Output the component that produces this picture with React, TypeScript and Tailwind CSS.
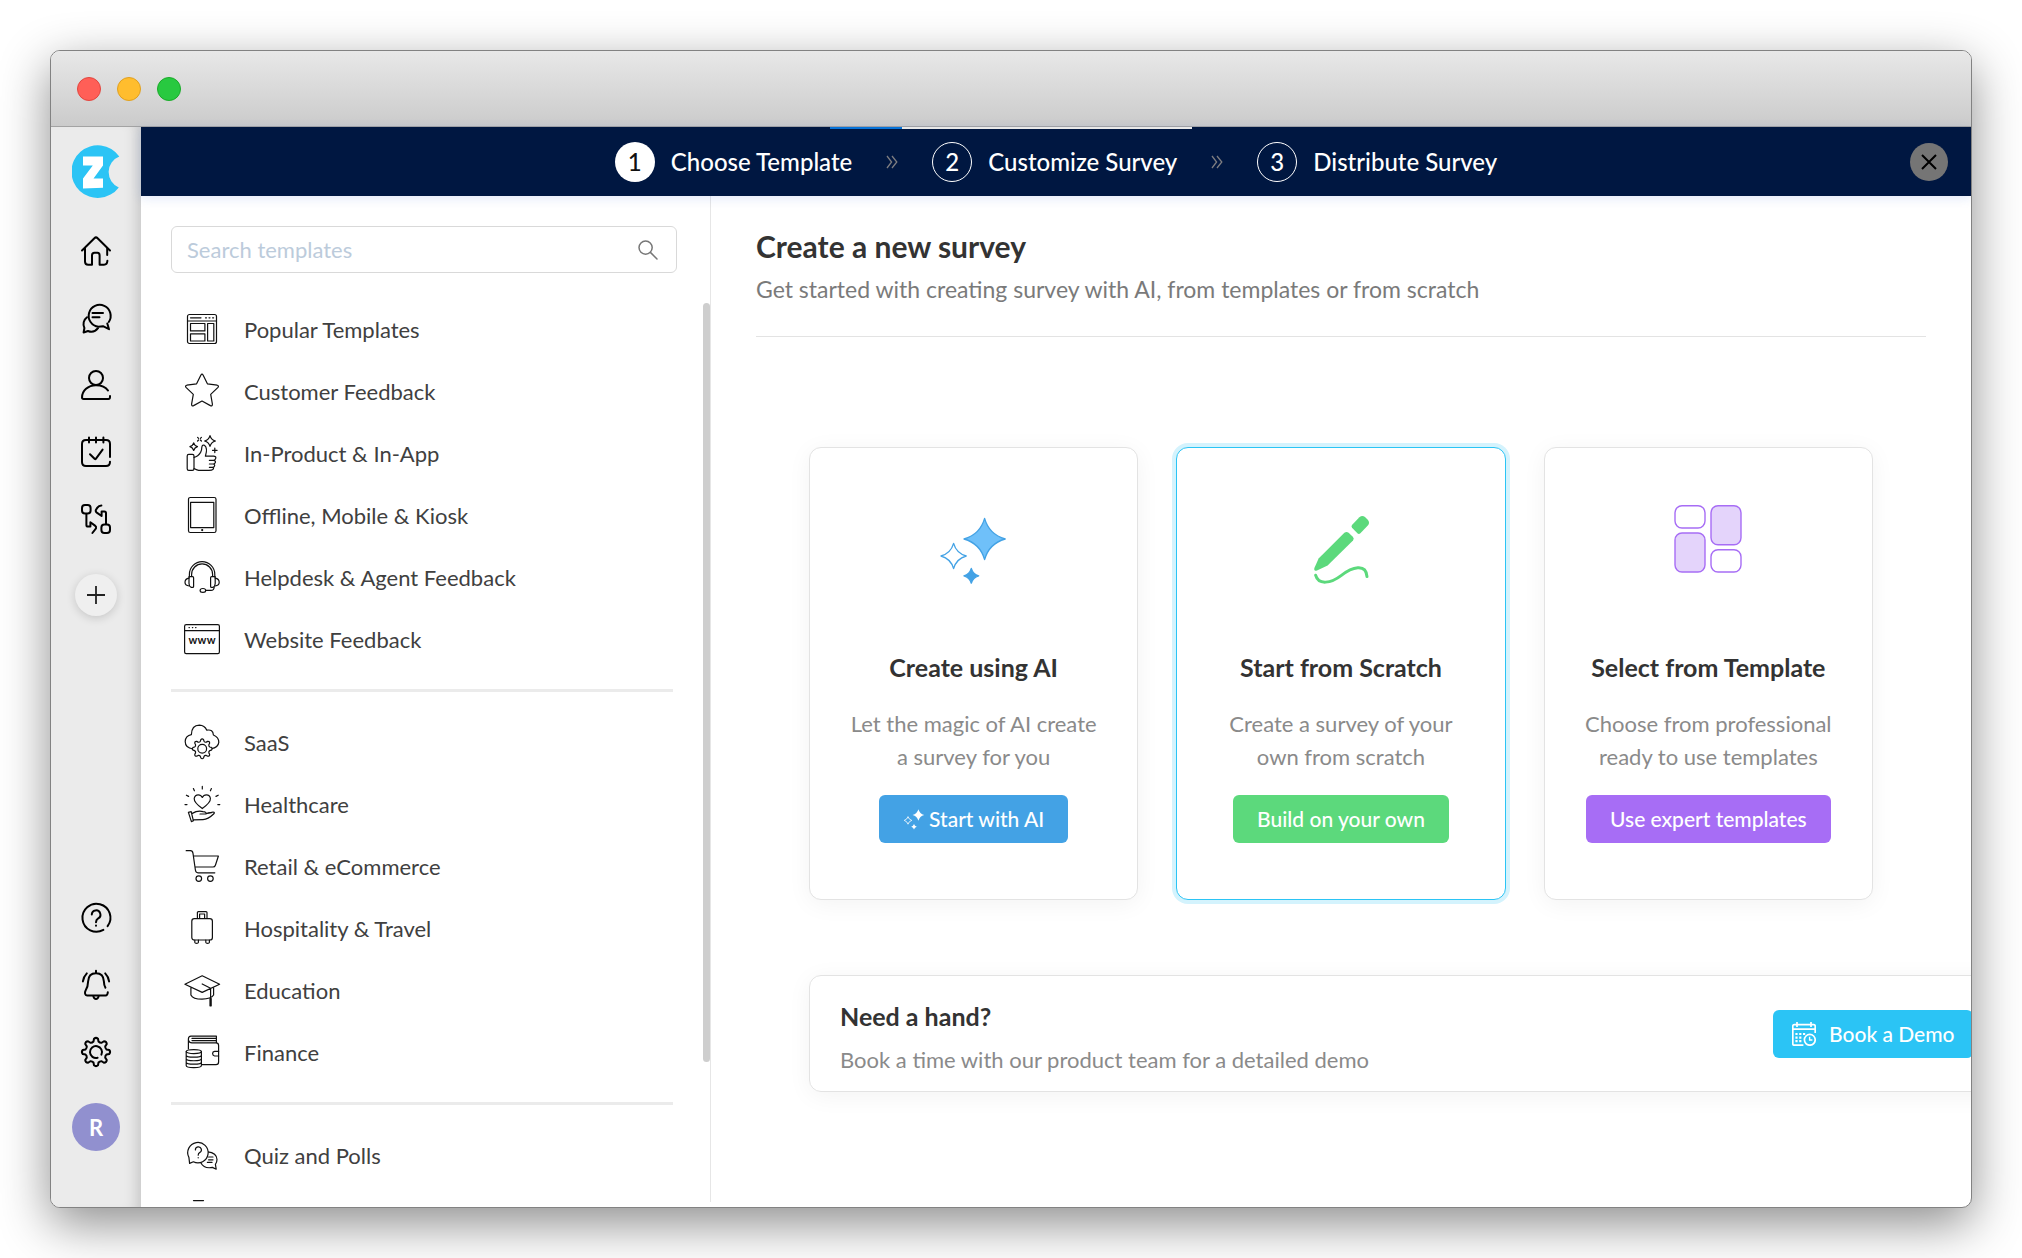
import React from "react";

/* ---------- drawing helpers ---------- */

function gearPath(cx: number, cy: number, outer: number, inner: number, teeth = 8) {
  const step = (Math.PI * 2) / teeth;
  const p = (r: number, a: number) =>
    `${(cx + r * Math.sin(a)).toFixed(2)} ${(cy - r * Math.cos(a)).toFixed(2)}`;
  let d = "";
  for (let i = 0; i < teeth; i++) {
    const a = i * step;
    d += `${i === 0 ? "M" : "L"}${p(inner, a - step * 0.3)}`;
    d += `L${p(outer - 1, a - step * 0.19)}Q${p(outer + 0.6, a)} ${p(outer - 1, a + step * 0.19)}`;
    d += `L${p(inner, a + step * 0.3)}Q${p(inner - 1, a + step * 0.5)} ${p(inner, a + step * 0.7)}`;
  }
  return d + "Z";
}

function sparklePath(cx: number, cy: number, r: number) {
  const k = r * 0.22;
  return `M${cx} ${cy - r}Q${cx + k} ${cy - k} ${cx + r} ${cy}Q${cx + k} ${cy + k} ${cx} ${cy + r}Q${cx - k} ${cy + k} ${cx - r} ${cy}Q${cx - k} ${cy - k} ${cx} ${cy - r}Z`;
}

function RailSvg({ children }: { children: React.ReactNode }) {
  return (
    <svg
      viewBox="0 0 30 30"
      className="h-[30px] w-[30px] overflow-visible"
      fill="none"
      stroke="#000"
      strokeWidth="2"
      strokeLinecap="round"
      strokeLinejoin="round"
      aria-hidden="true"
    >
      {children}
    </svg>
  );
}

function ListSvg({ children }: { children: React.ReactNode }) {
  return (
    <svg
      viewBox="0 0 36 36"
      className="h-9 w-9 shrink-0 overflow-visible"
      fill="none"
      stroke="#111"
      strokeWidth="1.2"
      strokeLinecap="round"
      strokeLinejoin="round"
      aria-hidden="true"
    >
      {children}
    </svg>
  );
}

/* ---------- rail icons ---------- */

const Logo = () => (
  <svg viewBox="0 0 48 54" className="h-[54px] w-12" aria-hidden="true">
    <path
      d="M47.3 11.6A26.3 26.3 0 1 0 46.8 42.4A16.6 16.6 0 0 1 47.3 11.6Z"
      fill="#2bc4f5"
    />
    <path d="M11 11.6H31V20.6L21.5 33.4H31V42.8L11 43.4V33.6L20.8 20.4H11Z" fill="#fff" />
  </svg>
);

const HomeIcon = () => (
  <RailSvg>
    <path d="M1 14.5 13.4 2.2Q15 .6 16.6 2.2L29 14.5" />
    <path d="M4 12.5V25.5Q4 28.7 7.2 28.7H11V19.5Q11 16.8 13.5 16.8H16.5Q18.6 16.8 18.6 19.5V28.7H23Q26.2 28.7 26.4 24.8M26.2 12.5V19" />
  </RailSvg>
);

const ChatIcon = () => (
  <RailSvg>
    <path d="M27.8 20A11 11 0 1 0 17.5 24.8L22 24.2 28 27.2 26.3 21.5" transform="translate(0 -1)" />
    <path d="M11.5 10H22M11.5 14.3H18.5" />
    <path d="M6 14.2A8.6 8.6 0 0 0 3.4 25L2.6 29.5 7 28Q13 30.4 17 25.2" />
  </RailSvg>
);

const UserIcon = () => (
  <RailSvg>
    <circle cx="15" cy="8" r="7" />
    <path d="M27 20.5Q23.5 15.2 15 15.2C7 15.2 1 20.8 1 27.6Q1 29 2.6 29H27.4Q29 29 29 27V26" />
  </RailSvg>
);

const CalendarIcon = () => (
  <RailSvg>
    <path d="M29 20V7Q29 3 25 3H5Q1 3 1 7V25Q1 29 5 29H25Q29 29 29 24.8" />
    <path d="M8 .6V5.6M15 .6V5.6M22.4 .6V5.6M9 17.2 13.8 22Q14.4 22.4 15 21.6L21.6 12.6" />
  </RailSvg>
);

const FlowIcon = () => (
  <RailSvg>
    <rect x="1" y="1" width="8.6" height="8.6" rx="3" />
    <rect x="20.4" y="20.4" width="8.6" height="8.6" rx="3" />
    <path d="M5.4 10V21Q5.4 22.6 7 22.6H9.4V18.2L14 21.6Q15.6 22.8 15 24.4L11.4 29" />
    <path d="M25 20V9.2Q25 7.6 23.4 7.6H20.6V12L15.8 8.6Q14.2 7.4 15 5.8L16.4 3.6Q17.8 1.4 20.4 1.4" />
  </RailSvg>
);

const HelpIcon = () => (
  <RailSvg>
    <path d="M26.6 23.2A14 14 0 1 0 22.4 26.9" />
    <path d="M10.8 11.6A4.3 4.3 0 1 1 17.2 15.4Q15 16.6 15 19.2M15 22.6V22.8" />
  </RailSvg>
);

const BellIcon = () => (
  <RailSvg>
    <path d="M15 .8V3M24.4 17.6Q23 15.5 22.9 11.5Q22.6 3.2 15 3.2T7.1 11.5Q7 16.8 4.6 20.5C3.4 22.6 4 25.4 6 25.4H24.6Q26.6 25.4 26.8 22.2" />
    <path d="M12.4 26.4Q13 29 15 29T17.6 26.4M5.8 3.4Q2.6 6.6 1.9 11.4M24.2 3.4Q27.4 6.6 28.1 11.4" />
  </RailSvg>
);

const SettingsIcon = () => (
  <RailSvg>
    <path d={gearPath(15, 15, 14.4, 10.8)} />
    <path d="M20.4 17.6A6 6 0 1 0 16.6 20.8" />
  </RailSvg>
);

/* ---------- template list icons ---------- */

const PopularIcon = () => (
  <ListSvg>
    <rect x="3.5" y="3.5" width="29" height="29" rx="2" />
    <path d="M3.5 10H32.5M6.5 6.8H17M21.5 6.8H22.5M25 6.8H26M28.6 6.8H29.6" />
    <rect x="6.5" y="12.5" width="14.4" height="7.4" />
    <rect x="6.5" y="22.8" width="14.4" height="7.2" />
    <rect x="23.6" y="12.5" width="6.2" height="17.5" />
  </ListSvg>
);

const StarIcon = () => (
  <ListSvg>
    <path d="M16.8 2.2q1.2-2 2.4 0l4.2 8.6 9.8 1.4q2 .6 .8 2.2l-7.3 7 1.7 9.8q0 2.2-2 1.4L18 28l-8.4 4.6q-2 .8-2-1.4l1.7-9.8-7.3-7q-1.2-1.6.8-2.2l9.8-1.4z" />
  </ListSvg>
);

const ThumbIcon = () => (
  <ListSvg>
    <rect x="3.2" y="19.4" width="6.8" height="16" rx="1.6" />
    <path d="M10 22.4Q14 21.6 16.6 17.4Q17.8 15.2 17.9 11.8Q18.4 9.6 20.4 10.2Q24 12.8 21.4 21.2H29.6Q32.2 21.4 31.8 23.2T29.6 25.4H25.4M29.6 25.4Q31.8 25.8 31.4 27.4T29.2 29H25.4M29.2 29Q31 29.4 30.6 30.8T28.6 32.4H25.4M28.6 32.4Q30.2 33.2 29 34.4Q28 35.4 25 35.4H14.6Q12.4 35 10 33.6" />
    <path d={sparklePath(26, 6, 5.4)} />
    <path d={sparklePath(9.7, 11.7, 3.8)} />
    <path d="M30.8 13V17.6M28.5 15.3H33.1M13.6 2.3 14.6 3.3M17.4 2.3 16.4 3.3M13.6 6 14.6 5M17.4 6 16.4 5" />
  </ListSvg>
);

const TabletIcon = () => (
  <ListSvg>
    <rect x="4.5" y="0.5" width="27.5" height="35" rx="1.8" />
    <rect x="6.6" y="5.4" width="23.2" height="25.2" />
    <circle cx="18.2" cy="33.1" r=".5" fill="#111" />
  </ListSvg>
);

const HeadsetIcon = () => (
  <ListSvg>
    <path d="M5.4 18V15.4A12.7 12.7 0 0 1 30.8 15.4V18M7.6 17V15.4A10.5 10.5 0 0 1 28.6 15.4V17" />
    <path d="M5 17.6H8.6Q9.6 17.6 9.6 18.8V27.4Q9.6 28.4 8.6 28.4H7.2Q5 27.4 5 24.6ZM31.2 17.6H27.6Q26.6 17.6 26.6 18.8V27.4Q26.6 28.4 27.6 28.4H29Q31.2 27.4 31.2 24.6Z" />
    <path d="M5 19.2Q1 20 1 23.2T5.2 27M31.2 19.2Q35.2 20 35.2 23.2T31 27M30.2 28Q30 31.4 27 31.4H21.8" />
    <ellipse cx="18.9" cy="31.4" rx="2.8" ry="1.9" />
  </ListSvg>
);

const WebsiteIcon = () => (
  <ListSvg>
    <rect x=".6" y="3.6" width="34.8" height="29" rx="1.6" />
    <path d="M.6 9.6H35.4M5 6.6H5.4M8.4 6.6H8.8M11.6 6.6H12" />
    <g
      textAnchor="middle"
      fill="#111"
      stroke="none"
      fontFamily="Lato, sans-serif"
      fontWeight="700"
      fontSize="11"
    >
      <text x="8.8" y="23.4">w</text>
      <text x="18" y="23.4">w</text>
      <text x="27.2" y="23.4">w</text>
    </g>
  </ListSvg>
);

const SaasIcon = () => (
  <ListSvg>
    <path d="M9 25Q1.2 24 1.2 17.6Q1.4 11.6 7.4 10.6Q7.6 1.4 15.4 1.2Q20.6 1.4 22.8 6.2Q29 5 29.4 11Q35 13.4 34.8 18.4Q34.2 23.6 27.4 24.6" />
    <path d={gearPath(18.2, 24.8, 10.2, 7.8, 8)} fill="#fff" />
    <circle cx="18.2" cy="24.8" r="4.4" />
  </ListSvg>
);

const HealthIcon = () => (
  <ListSvg>
    <path d="M18.3 22.6Q9.8 16.4 10.2 12.4Q11 8.8 14.2 8.8Q17 8.8 18.3 11.4Q19.6 8.8 22.4 8.8Q25.8 8.8 26.4 12.4Q26.8 16.4 18.3 22.6Z" />
    <path d="M18.3 .4V3M9.4 2.6 10.4 4.8M27.4 2.6 26.4 4.8M2.4 9.2 4.6 10.4M34.2 9.2 32 10.4M1 18.6H3M35.8 18.6H33.8" />
    <path d="M4.4 26.4 7.2 25.6 9.4 34.8 7.4 35.6ZM7.8 27.6 12 25.6Q16 24.8 19 25.6Q22.8 26 22 28H16M22 27.6 29 26Q31.4 26.2 29.6 28Q24 33.4 19 33.6L9.2 33.8" />
    <path d="M24 27 27.6 26.6" />
  </ListSvg>
);

const CartIcon = () => (
  <ListSvg>
    <path d="M2.2 2.7H6.4Q8.6 2.8 9 5.4L11.4 22Q11.8 24.8 14 24.8H30.8M9.4 8H34.4L31.4 17.2Q30.8 19 29 19H11" />
    <circle cx="14.8" cy="30.6" r="2.8" />
    <circle cx="26.4" cy="30.6" r="2.8" />
  </ListSvg>
);

const SuitcaseIcon = () => (
  <ListSvg>
    <rect x="7.8" y="8.6" width="20.6" height="21.4" rx="2.6" />
    <path d="M13.4 8.4V2.6Q13.4 1.6 14.4 1.6H22Q23 1.6 23 2.6V8.4M15.6 8.4V4H20.6V8.4M10.8 30.2V32.4Q11 33.4 12.6 33.4T14.4 32.4V30.2M21.8 30.2V32.4Q22 33.4 23.6 33.4T25.4 32.4V30.2" />
  </ListSvg>
);

const EducationIcon = () => (
  <ListSvg>
    <path d="M.9 12.2 18.2 3.8 35.6 12.2 18.2 20.4ZM6.9 15V23Q9 27.2 18 27.2Q27 27 29.6 23V15M18.2 12 26.6 16.2V27" />
    <path d="M26.6 27V33.4" strokeWidth="2.4" />
  </ListSvg>
);

const FinanceIcon = () => (
  <ListSvg>
    <path d="M4.4 15V5Q4.4 2.2 7 2.2H32.4V8.8M4.6 6.4Q5.2 8.8 8 8.8H32Q34.6 8.8 34.6 11.4V28Q34.6 30.6 32 30.6H18M8 4.4H32.2M8 6.6H32.2" />
    <path d="M34.6 17.4H30.6Q28.6 17.6 28.6 19.6T30.6 22H34.6" />
    <ellipse cx="9.8" cy="17.6" rx="7.6" ry="2" fill="#fff" />
    <path d="M2.2 17.6V31.6C2.2 34.4 17.4 34.4 17.4 31.6V17.6M2.2 21.2C2.2 23.8 17.4 23.8 17.4 21.2M2.2 24.8C2.2 27.4 17.4 27.4 17.4 24.8M2.2 28.2C2.2 30.8 17.4 30.8 17.4 28.2" />
  </ListSvg>
);

const QuizIcon = () => (
  <ListSvg>
    <path d="M23.6 14.8Q32.8 15.6 33 22.6Q33 25.4 31.4 27.4L32.2 32.2 28.4 30.4Q20 32 17 26" />
    <path d="M24.6 20H29M24.6 22.8H29M23.4 25.4H28" />
    <path d="M5.6 26.4 4.9 20.4A10.2 10.2 0 1 1 9.4 24.8Z" fill="#fff" />
    <path d="M11.4 13A3 3 0 1 1 15.6 15.6Q14.2 16.2 14.2 18.2M14.2 20.6V20.8" />
  </ListSvg>
);

const BadgeIcon = () => (
  <ListSvg>
    <path d="M9.5 1.6H19.5" />
    <rect x="6" y="5" width="24" height="28" rx="2" />
  </ListSvg>
);

/* ---------- card art ---------- */

const SparklesArt = () => (
  <svg viewBox="0 0 100 100" className="h-[100px] w-[100px]" fill="none" stroke="#43a2e5" strokeWidth="1.3" strokeLinejoin="round" aria-hidden="true">
    <path d={sparklePath(60.6, 48, 20.6)} fill="#6fc0f9" />
    <path d={sparklePath(29.6, 65, 12.6)} />
    <path d={sparklePath(47.3, 84.8, 7.4)} fill="#43a2e5" />
  </svg>
);

const PenArt = () => (
  <svg viewBox="0 0 100 100" className="h-[100px] w-[100px]" fill="#5cd97c" aria-hidden="true">
    <path d="M68.4 26.2Q71.2 23.8 74 26L77 29Q79.2 31.8 76.8 34.6L69.4 42.2Q67.8 43.6 66.4 42.2L61 36.8Q59.8 35.4 61.2 33.8Z" />
    <path d="M53.4 41.8Q55.6 40 57.6 41.8L61.8 45.8Q63.6 47.6 62 49.6L36.6 74.6 26 79.4Q22.6 80.6 23.4 77L27.6 67.4Z" />
    <path d="M24.6 84.2C27.4 94.4 40 92.4 50.4 84.4C61 76 75 72 76 85.6" fill="none" stroke="#5cd97c" strokeWidth="3" strokeLinecap="round" />
  </svg>
);

const GridArt = () => (
  <svg viewBox="0 0 100 100" className="h-[100px] w-[100px]" fill="none" stroke="#a76df5" strokeWidth="1.4" aria-hidden="true">
    <rect x="17" y="14.8" width="30" height="22.2" rx="7" />
    <rect x="17" y="42" width="30" height="39" rx="7" fill="#e4d4fb" />
    <rect x="53" y="14.8" width="30" height="39" rx="7" fill="#e4d4fb" />
    <rect x="53" y="58.8" width="30" height="22.2" rx="7" />
  </svg>
);

const SmallSparkles = () => (
  <svg viewBox="0 0 22 22" className="h-[22px] w-[22px]" fill="#fff" aria-hidden="true">
    <path d={sparklePath(15.4, 7, 5.8)} />
    <path d={sparklePath(5, 12.4, 3.8)} fill="none" stroke="#fff" strokeWidth=".8" />
    <path d={sparklePath(11, 18.8, 2.8)} />
  </svg>
);

const DemoIcon = () => (
  <svg viewBox="0 0 24 24" className="h-6 w-6" fill="none" stroke="#fff" strokeWidth="1.7" aria-hidden="true">
    <path d="M23.2 11V4Q23.2 2.6 21.8 2.6H2.2Q.8 2.6 .8 4V21.8Q.8 23.2 2.2 23.2H11.4M.8 7.2H23.2M5 0V5M19 0V5" />
    <path d="M3.4 12H5.6M7.2 12H9.4M11 12H13.2M3.4 15.6H5.6M7.2 15.6H9.4M3.4 19.2H5.6M7.2 19.2H9.4" strokeWidth="2.2" />
    <circle cx="17.8" cy="17.8" r="5.4" />
    <path d="M17.6 14.8V18H20.4" strokeWidth="1.4" />
  </svg>
);

const Chevrons = () => (
  <svg viewBox="0 0 12 14" className="h-[14px] w-3" fill="none" stroke="#7d7d80" strokeWidth="1.3" aria-hidden="true">
    <path d="M1 1 5.6 7 1 13M6 1 10.8 7 6 13" />
  </svg>
);

/* ---------- data ---------- */

const groups: { label: string; Icon: React.FC }[][] = [
  [
    { label: "Popular Templates", Icon: PopularIcon },
    { label: "Customer Feedback", Icon: StarIcon },
    { label: "In-Product & In-App", Icon: ThumbIcon },
    { label: "Offline, Mobile & Kiosk", Icon: TabletIcon },
    { label: "Helpdesk & Agent Feedback", Icon: HeadsetIcon },
    { label: "Website Feedback", Icon: WebsiteIcon },
  ],
  [
    { label: "SaaS", Icon: SaasIcon },
    { label: "Healthcare", Icon: HealthIcon },
    { label: "Retail & eCommerce", Icon: CartIcon },
    { label: "Hospitality & Travel", Icon: SuitcaseIcon },
    { label: "Education", Icon: EducationIcon },
    { label: "Finance", Icon: FinanceIcon },
  ],
  [
    { label: "Quiz and Polls", Icon: QuizIcon },
    { label: "", Icon: BadgeIcon },
  ],
];

const topNav = [
  { label: "Home", Icon: HomeIcon },
  { label: "Surveys", Icon: ChatIcon },
  { label: "Contacts", Icon: UserIcon },
  { label: "Tasks", Icon: CalendarIcon },
  { label: "Workflows", Icon: FlowIcon },
];

const bottomNav = [
  { label: "Help", Icon: HelpIcon },
  { label: "Notifications", Icon: BellIcon },
  { label: "Settings", Icon: SettingsIcon },
];

const steps = ["Choose Template", "Customize Survey", "Distribute Survey"];

const cards = [
  {
    title: "Create using AI",
    lines: ["Let the magic of AI create", "a survey for you"],
    action: "Start with AI",
    Art: SparklesArt,
    ButtonIcon: SmallSparkles,
    frame: "border-[#e3e3e3] shadow-[0_4px_24px_rgba(0,0,0,0.05)]",
    button: "bg-[#43a2e5]",
  },
  {
    title: "Start from Scratch",
    lines: ["Create a survey of your", "own from scratch"],
    action: "Build on your own",
    Art: PenArt,
    frame: "border-[#2bc4f5] shadow-[0_0_0_4px_#d4f3fd]",
    button: "bg-[#5cd97c]",
  },
  {
    title: "Select from Template",
    lines: ["Choose from professional", "ready to use templates"],
    action: "Use expert templates",
    Art: GridArt,
    frame: "border-[#e3e3e3] shadow-[0_4px_24px_rgba(0,0,0,0.05)]",
    button: "bg-[#a76df5]",
  },
];

/* ---------- sections ---------- */

function RailButton({ label, children }: { label: string; children: React.ReactNode }) {
  return (
    <button type="button" aria-label={label} className="flex h-[67px] w-full items-center justify-center">
      {children}
    </button>
  );
}

function Rail() {
  return (
    <nav className="flex w-[90px] shrink-0 flex-col items-center bg-[#ebebeb] pt-[18px] pb-14 shadow-[inset_-14px_0_14px_-10px_rgba(0,0,0,0.16)]">
      <Logo />
      <div className="mt-[18px] w-full">
        {topNav.map(({ label, Icon }) => (
          <RailButton key={label} label={label}>
            <Icon />
          </RailButton>
        ))}
      </div>
      <button
        type="button"
        aria-label="Add"
        className="mt-[22px] flex h-[42px] w-[42px] shrink-0 items-center justify-center rounded-full bg-[#efefef] shadow-[0_2px_10px_rgba(0,0,0,0.16)]"
      >
        <svg viewBox="0 0 18 18" className="h-[18px] w-[18px]" stroke="#222" strokeWidth="1.8" aria-hidden="true">
          <path d="M9 0V18M0 9H18" />
        </svg>
      </button>
      <div className="mt-auto w-full">
        {bottomNav.map(({ label, Icon }) => (
          <RailButton key={label} label={label}>
            <Icon />
          </RailButton>
        ))}
      </div>
      <button
        type="button"
        aria-label="Account"
        className="mt-[18px] flex h-12 w-12 shrink-0 items-center justify-center rounded-full bg-[#9190cf] text-[22px] font-bold text-white"
      >
        R
      </button>
    </nav>
  );
}

function StepBar() {
  return (
    <header className="relative z-10 flex h-[69px] shrink-0 items-center bg-[#001741] px-[23px] text-white shadow-[0_2px_10px_rgba(60,110,220,0.16)]">
      <div className="absolute top-0 left-[calc(50%-226px)] flex h-0.5 w-[362px] bg-[#e8e8e8]">
        <div className="w-1/5 bg-[#0672d8]" />
      </div>
      <ol className="flex flex-1 items-center justify-center gap-[34px] pl-[38px]">
        {steps.map((step, i) => (
          <React.Fragment key={step}>
            {i > 0 && (
              <li aria-hidden="true">
                <Chevrons />
              </li>
            )}
            <li className="flex items-center gap-4 text-[24px] leading-8 font-medium">
              <span
                className={
                  i === 0
                    ? "flex h-10 w-10 items-center justify-center rounded-full bg-white text-[#111]"
                    : "flex h-10 w-10 items-center justify-center rounded-full border border-white"
                }
              >
                {i + 1}
              </span>
              {step}
            </li>
          </React.Fragment>
        ))}
      </ol>
      <button type="button" aria-label="Close" className="flex h-[38px] w-[38px] items-center justify-center rounded-full bg-[#757575]">
        <svg viewBox="0 0 16 16" className="h-4 w-4" stroke="#000" strokeWidth="2" aria-hidden="true">
          <path d="M1 1 15 15M15 1 1 15" />
        </svg>
      </button>
    </header>
  );
}

function TemplatePanel() {
  return (
    <aside className="mb-[5px] flex min-h-0 w-[570px] shrink-0 flex-col border-r border-[#e6e6e6] pl-[30px]">
      <label className="mt-[30px] mr-[33px] flex h-[47px] shrink-0 items-center rounded-md border border-[#d9d9d9] pr-[18px] pl-[15px]">
        <input
          type="search"
          aria-label="Search templates"
          placeholder="Search templates"
          className="min-w-0 flex-1 bg-transparent text-[22px] text-[#3c3c3c] outline-none placeholder:text-[#bccbdb]"
        />
        <svg viewBox="0 0 20 20" className="h-5 w-5" fill="none" stroke="#777" strokeWidth="1.5" strokeLinecap="round" aria-hidden="true">
          <circle cx="7.6" cy="7.6" r="6.6" />
          <path d="M12.4 12.4 19 19" />
        </svg>
      </label>
      <div className="mt-[25px] flex min-h-0 flex-1 overflow-hidden">
        <div className="min-w-0 flex-1">
          {groups.map((group, g) => (
            <React.Fragment key={g}>
              {g > 0 && <hr className="my-[19px] border-0 border-t-[3px] border-[#ebebeb]" />}
              <ul>
                {group.map(({ label, Icon }) => (
                  <li key={label}>
                    <a href="#" className="flex h-[62px] items-center gap-6 pl-[13px] text-[22px] text-[#404040]">
                      <Icon />
                      {label}
                    </a>
                  </li>
                ))}
              </ul>
            </React.Fragment>
          ))}
        </div>
        <div className="mt-[5px] ml-[30px] h-[84%] w-[7px] shrink-0 rounded-full bg-[#cecece]" />
      </div>
    </aside>
  );
}

function Content() {
  return (
    <main className="min-w-0 flex-1 overflow-hidden px-[45px] pt-8">
      <h1 className="text-[30px] leading-9 font-bold text-[#333]">Create a new survey</h1>
      <p className="mt-2.5 text-[23px] leading-[30px] text-[#7a7a7a]">
        Get started with creating survey with AI, from templates or from scratch
      </p>
      <hr className="mt-8 border-[#e3e3e3]" />
      <div className="px-[53px]">
        <div className="mt-[110px] grid grid-cols-3 gap-[38px]">
          {cards.map(({ title, lines, action, Art, ButtonIcon, frame, button }) => (
            <section
              key={title}
              className={`flex flex-col items-center rounded-xl border bg-white pt-[43px] pb-14 text-center ${frame}`}
            >
              <Art />
              <h2 className="mt-[60px] text-[25px] leading-8 font-bold text-[#333]">{title}</h2>
              <p className="mt-6 text-[22px] leading-[33px] text-[#8a8a8a]">
                {lines[0]}
                <br />
                {lines[1]}
              </p>
              <button
                type="button"
                className={`mt-[22px] flex h-12 items-center gap-1 rounded-md px-6 text-[21px] font-medium text-white ${button}`}
              >
                {ButtonIcon && <ButtonIcon />}
                {action}
              </button>
            </section>
          ))}
        </div>
        <section className="mt-[75px] -mr-[131px] flex items-center justify-between rounded-xl border border-[#e3e3e3] pt-[25px] pr-[30px] pb-4 pl-[30px] shadow-[0_4px_24px_rgba(0,0,0,0.05)]">
          <div>
            <h2 className="text-[25px] leading-[30px] font-bold text-[#333]">Need a hand?</h2>
            <p className="mt-3.5 text-[22px] leading-[30px] text-[#8a8a8a]">
              Book a time with our product team for a detailed demo
            </p>
          </div>
          <button
            type="button"
            className="-mt-2 flex h-12 w-[200px] items-center gap-[13px] rounded-md bg-[#2bc4f5] pl-[19px] text-[21px] font-medium whitespace-nowrap text-white"
          >
            <DemoIcon />
            Book a Demo
          </button>
        </section>
      </div>
    </main>
  );
}

export default function App() {
  return (
    <div className="flex h-screen bg-white p-[50px] font-['Lato',sans-serif]">
      <div className="flex min-w-0 flex-1 flex-col overflow-hidden rounded-[10px] border border-[#828282] bg-white shadow-[0_16px_50px_rgba(0,0,0,0.45)]">
        <div className="flex h-[76px] shrink-0 items-center gap-4 border-b border-[#a3a3a3] bg-linear-to-b from-[#e8e8e8] to-[#cbcbcb] pl-[26px]">
          <button type="button" aria-label="Close window" className="h-6 w-6 rounded-full border border-[#e2463f] bg-[#ff5f57]" />
          <button type="button" aria-label="Minimize window" className="h-6 w-6 rounded-full border border-[#e0a020] bg-[#ffbd2e]" />
          <button type="button" aria-label="Zoom window" className="h-6 w-6 rounded-full border border-[#1aab29] bg-[#28c940]" />
        </div>
        <div className="flex min-h-0 flex-1">
          <Rail />
          <div className="flex min-w-0 flex-1 flex-col">
            <StepBar />
            <div className="flex min-h-0 flex-1">
              <TemplatePanel />
              <Content />
            </div>
          </div>
        </div>
      </div>
    </div>
  );
}
